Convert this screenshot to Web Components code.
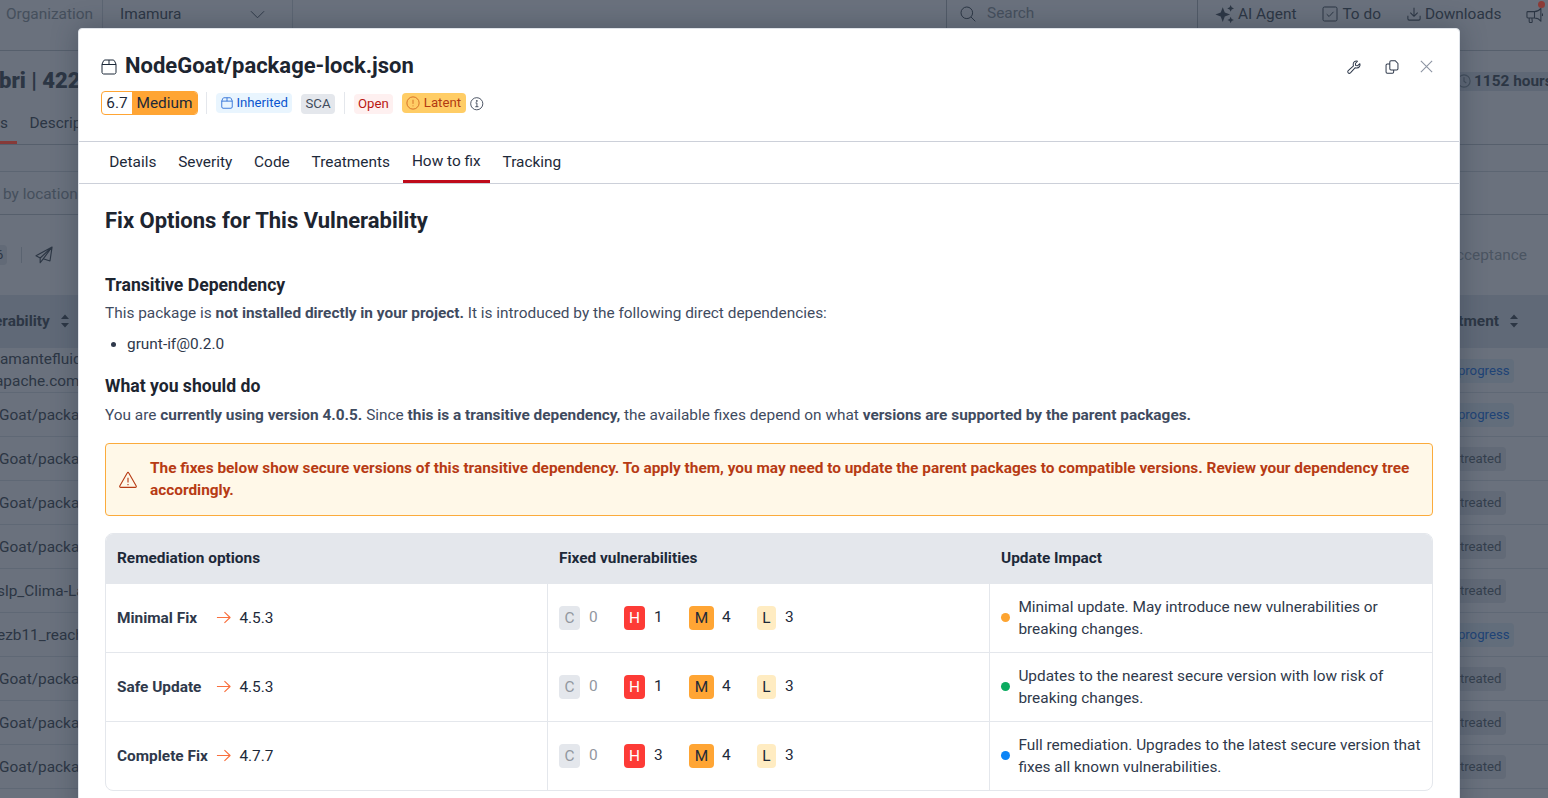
<!DOCTYPE html>
<html lang="en">
<head>
<meta charset="utf-8">
<title>NodeGoat/package-lock.json</title>
<style>
    body {
        margin: 0;
        height: 798px;
        overflow: hidden;
        position: relative;
        font-family: Roboto, "Liberation Sans", sans-serif;
        font-size: 15.4px;
        line-height: 22px;
        color: #2f394b;
        background: #6a717d;
    }
    vuln-modal {
        position: absolute;
        left: 78px;
        top: 28px;
    }
</style>
</head>
<body>
<page-backdrop></page-backdrop>
<vuln-modal heading="NodeGoat/package-lock.json">
    <severity-score slot="tags" score="6.7">Medium</severity-score>
    <tag-divider slot="tags" style="margin: 0 9px 0 8px"></tag-divider>
    <tag-pill slot="tags" kind="info" icon="box" style="width: 67px">Inherited</tag-pill>
    <tag-pill slot="tags" kind="neutral" style="margin: 1px 0 0 9px; width: 24px">SCA</tag-pill>
    <tag-divider slot="tags" style="margin: 0 9px"></tag-divider>
    <tag-pill slot="tags" kind="danger" style="margin-top: 1px; width: 29px">Open</tag-pill>
    <tag-pill slot="tags" kind="warn" icon="alert" style="margin-left: 9px; width: 55px">Latent</tag-pill>
    <ui-icon slot="tags" name="info" size="13.5" style="margin: 1px 0 0 4px"></ui-icon>
    <modal-tabs slot="tabs" items="Details,Severity,Code,Treatments,How to fix,Tracking" active="How to fix"></modal-tabs>
    <fix-guide></fix-guide>
</vuln-modal>

<script>
const ICONS = {
    box: '<path d="M4 1h8c.7 0 1.200.3 1.500.9L15 5.200v8.100c0 1-.8 1.700-1.700 1.700H2.700C1.800 15 1 14.300 1 13.300V5.200l1.500-3.300C2.800 1.300 3.300 1 4 1z M1 5.500h14 M8 1v4.500"/>',
    alert: '<circle cx="8" cy="8" r="7"/><path d="M8 4.300v4.700 M8 10.800v1"/>',
    info: '<circle cx="8" cy="8" r="7.200"/><path d="M6.500 7h1.700v4.500 M6.300 11.500h3.700 M7.600 4.200h1v1h-1z"/>',
    wrench: '<path d="M14.700 4.200 12.200 6.500 9.900 6.200 9.600 4l2.400-2.600C9.500.5 6.800 2.400 7.100 5.200c0 .6.100 1 .3 1.500L1.400 12.200c-.8.800-.6 1.900 0 2.500s1.700.7 2.500 0l5.500-5.900c.5.200 1 .3 1.600.3 2.800.100 4.600-2.500 3.700-4.900z"/>',
    copy: '<path d="M6.900 .8h4.700L14.800 4v6c0 .8-.6 1.400-1.400 1.400H6.900c-.8 0-1.400-.6-1.400-1.400V2.200C5.500 1.400 6.100.8 6.900.8z M5.500 4.500H2.600c-.7 0-1.400.6-1.400 1.400v7.900c0 .8.6 1.400 1.400 1.400h5.900c.8 0 1.400-.6 1.400-1.400v-2.400"/>',
    close: '<path d="M2 2l12 12 M14 2 2 14"/>',
    warning: '<path d="M7.300 1.700.7 13.300c-.3.600.1 1.300.8 1.300h13c.7 0 1.100-.7.8-1.300L8.700 1.700c-.3-.6-1.100-.6-1.400 0z M8 6v4.200 M8 11.600v1"/>',
    arrow: '<path d="M1 8h14 M9 2.200 15 8l-6 5.800"/>',
    chevron: '<path d="M1 4.500 8 11.500l7-7"/>',
    search: '<circle cx="6.800" cy="6.800" r="5.800"/><path d="m11 11 4.300 4.300"/>',
    sparkle: '<path fill="currentColor" stroke="none" d="M6 2 7.800 6.700l4.700 1.800L7.800 10.300 6 15 4.200 10.300-.5 8.500l4.700-1.800z M13 0l.9 2.100L16 3l-2.100.9L13 6l-.9-2.100L10 3l2.100-.9z M13 10.500l.9 2 2 .9-2 .9-.9 2-.9-2-2-.9 2-.9z"/>',
    check: '<rect x="1" y="1" width="14" height="14" rx="1.500"/><path d="m4.700 8.200 2.400 2.300 4.400-4.700"/>',
    download: '<path d="M8 .8v9.700 M3.800 6.500 8 10.600l4.200-4.100 M1 10v3.500c0 .9.600 1.500 1.500 1.500h11c.9 0 1.500-.6 1.500-1.500V10"/>',
    horn: '<path d="M1.800 5.300H8c2.600 0 4.700-1.300 6-3v12c-1.300-1.700-3.400-3-6-3H1.800c-.5 0-.9-.4-.9-.9V6.200c0-.5.4-.9.9-.9z M8 5.300v6 M3 11.300v3.200c0 .700.5 1 1 1h1c.6 0 1-.5.900-1l-.4-3.200 M15.500 7v2.500"/>',
    clock: '<circle cx="8" cy="8" r="7"/><path d="M8 3.800V8.300l2.600 1.900"/>',
    plane: '<path d="M15.200.9.900 8.700l3.700 2L15.200.9 13.300 13.300 7.300 11.400 15.200.9 M4.600 10.700v4.200l2.700-3.500"/>',
    sort: '<path fill="currentColor" stroke="none" d="M8 1.500 12 6H4z M8 14.500 4 10h8z"/>'
};

class UiIcon extends HTMLElement {
    constructor() {
        super();
        this.attachShadow({ mode: 'open' });
    }

    connectedCallback() {
        const size = this.getAttribute('size') || 16;
        const weight = this.getAttribute('weight') || 1;
        this.shadowRoot.innerHTML = `
            <style>
                :host { display: inline-flex; flex: none; }
                svg { display: block; overflow: visible; }
            </style>
            <svg width="${size}" height="${size}" viewBox="0 0 16 16" fill="none" stroke="currentColor"
                stroke-width="${weight}" stroke-linejoin="round">${ICONS[this.getAttribute('name')]}</svg>
        `;
    }
}

class TagPill extends HTMLElement {
    constructor() {
        super();
        this.attachShadow({ mode: 'open' });
        const icon = this.getAttribute('icon');
        this.shadowRoot.innerHTML = `
            <style>
                :host {
                    display: inline-flex;
                    align-items: center;
                    justify-content: space-between;
                    height: 20px;
                    padding: 0 5px;
                    border-radius: 4px;
                    font-size: 13.2px;
                    line-height: 20px;
                    white-space: nowrap;
                }
                :host([kind=info]) { background: #e9f5fe; color: #0b55cf; padding-right: 4px; }
                :host([kind=neutral]) { background: #e4e7ec; color: #3f4b5c; }
                :host([kind=neutral]) span { margin-left: -.5px; }
                :host([kind=danger]) { background: #fef0f0; color: #b91712; }
                :host([kind=danger]) span { margin-left: -1px; }
                :host([kind=warn]) { background: #ffcd66; color: #b23a12; padding: 0 5px 0 4px; }
                :host([kind=warn]) ui-icon { color: #d0661f; }
            </style>
            ${icon ? `<ui-icon name="${icon}" size="${icon === 'box' ? 12 : 14}"></ui-icon>` : ''}
            <span><slot></slot></span>
        `;
    }
}

class TagDivider extends HTMLElement {
    constructor() {
        super();
        this.attachShadow({ mode: 'open' });
        this.shadowRoot.innerHTML = `
            <style>
                :host { display: block; width: 1px; height: 22px; background: #e4e7ec; }
            </style>
        `;
    }
}

class SeverityScore extends HTMLElement {
    constructor() {
        super();
        this.attachShadow({ mode: 'open' });
        this.shadowRoot.innerHTML = `
            <style>
                :host {
                    display: flex;
                    box-sizing: border-box;
                    width: 97px;
                    height: 24px;
                    border: 1px solid #ffa534;
                    border-radius: 4px;
                    overflow: hidden;
                    line-height: 22px;
                    color: #1d2939;
                }
                .score { width: 30px; text-align: center; }
                .level { flex: 1; text-align: center; background: #ffa534; }
            </style>
            <span class="score">${this.getAttribute('score')}</span>
            <span class="level"><slot></slot></span>
        `;
    }
}

class ModalTabs extends HTMLElement {
    constructor() {
        super();
        this.attachShadow({ mode: 'open' });
        const active = this.getAttribute('active');
        const items = this.getAttribute('items').split(',');
        this.shadowRoot.innerHTML = `
            <style>
                :host {
                    display: flex;
                    gap: 4px;
                    height: 41px;
                    padding-left: 21.3px;
                    border-top: 1px solid #ccd0d9;
                    border-bottom: 1px solid #ccd0d9;
                    color: #1d2939;
                }
                span { padding: 0 8.95px; line-height: 40px; }
                .active { box-sizing: border-box; line-height: 38px; border-bottom: 3px solid #bf0b1a; }
            </style>
            ${items.map(t => `<span${t === active ? ' class="active"' : ''}>${t}</span>`).join('')}
        `;
    }
}

class NoticeBox extends HTMLElement {
    constructor() {
        super();
        this.attachShadow({ mode: 'open' });
        this.shadowRoot.innerHTML = `
            <style>
                :host {
                    display: flex;
                    align-items: center;
                    gap: 13px;
                    box-sizing: border-box;
                    height: 73px;
                    padding: 0 13px 2px;
                    border: 1px solid #fbab3c;
                    border-radius: 4px;
                    background: #fff8e8;
                    color: #b73b14;
                    font-weight: 700;
                }
                ui-icon { margin-top: 2px; }
            </style>
            <ui-icon name="warning" size="18"></ui-icon>
            <span><slot></slot></span>
        `;
    }
}

class SeverityCount extends HTMLElement {
    constructor() {
        super();
        this.attachShadow({ mode: 'open' });
        this.shadowRoot.innerHTML = `
            <style>
                :host { display: flex; gap: 9px; color: #1d2939; }
                .chip {
                    width: 21px;
                    height: 24px;
                    line-height: 24px;
                    border-radius: 4px;
                    text-align: center;
                }
                .count { width: 9px; line-height: 22px; }
                :host([level=C]) { color: #92979f; }
                :host([level=C]) .chip { background: #e4e7ec; }
                :host([level=H]) .chip { background: #fd3b36; color: #fff; }
                :host([level=M]) { gap: 8px; }
                :host([level=M]) .chip { background: #ffa534; width: 25px; }
                :host([level=L]) .chip { background: #ffecc2; width: 19px; }
            </style>
            <span class="chip">${this.getAttribute('level')}</span>
            <span class="count">${this.getAttribute('count')}</span>
        `;
    }
}

class FixRow extends HTMLElement {
    constructor() {
        super();
        this.attachShadow({ mode: 'open' });
        const counts = this.getAttribute('counts').split(',');
        this.shadowRoot.innerHTML = `
            <style>
                :host {
                    display: grid;
                    grid-template-columns: 442px 442px 1fr;
                    height: 68px;
                }
                :host(:not(:last-child)) { border-bottom: 1px solid #e4e7ec; }
                div { display: flex; align-items: center; padding-left: 11px; }
                div + div { border-left: 1px solid #e4e7ec; margin-left: -1px; }
                b { width: 99px; }
                .version { color: #1d2939; }
                .counts { gap: 26px; }
                ui-icon { color: #f9703e; margin: -1px 8.400px 0 0; }
                i { flex: none; width: 9px; height: 9px; margin: -1px 8.400px 0 0; border-radius: 50%; }
            </style>
            <div><b>${this.getAttribute('name')}</b><ui-icon name="arrow" size="15" weight="1.2"></ui-icon><span class="version">${this.getAttribute('version')}</span></div>
            <div class="counts">
                ${['C', 'H', 'M', 'L'].map((l, i) => `<severity-count level="${l}" count="${counts[i]}"></severity-count>`).join('')}
            </div>
            <div><i style="background: ${this.getAttribute('dot')}"></i><span><slot></slot></span></div>
        `;
    }
}

class FixTable extends HTMLElement {
    constructor() {
        super();
        this.attachShadow({ mode: 'open' });
        this.shadowRoot.innerHTML = `
            <style>
                :host {
                    display: block;
                    border: 1px solid #e4e7ec;
                    border-radius: 8px;
                    overflow: hidden;
                }
                header {
                    display: grid;
                    grid-template-columns: 442px 442px 1fr;
                    height: 50px;
                    line-height: 48px;
                    background: #e4e7ec;
                    color: #1d2939;
                    font-weight: 700;
                }
                header span { padding-left: 11px; }
            </style>
            <header><span>Remediation options</span><span>Fixed vulnerabilities</span><span>Update Impact</span></header>
            <slot></slot>
        `;
    }
}

class FixGuide extends HTMLElement {
    constructor() {
        super();
        this.attachShadow({ mode: 'open' });
        this.shadowRoot.innerHTML = `
            <style>
                :host { display: block; padding: 21px 26px 0; }
                h2, h3, p, ul { margin: 0; }
                h2 { font-size: 22px; line-height: 32px; color: #1d2530; }
                h3 { font-size: 17.6px; line-height: 26px; color: #1d2530; }
                h2 + h3 { margin-top: 35px; }
                p { margin-top: 4px; color: #3f4b5f; }
                ul { margin: 9px 0 18px; padding-left: 22px; }
                ul + h3 + p { margin-top: 5px; }
                notice-box { margin: 17px 0; }
            </style>
            <h2>Fix Options for This Vulnerability</h2>
            <h3>Transitive Dependency</h3>
            <p>This package is <b>not installed directly in your project.</b> It is introduced by the following direct dependencies:</p>
            <ul><li>grunt-if@0.2.0</li></ul>
            <h3>What you should do</h3>
            <p>You are <b>currently using version 4.0.5.</b> Since <b>this is a transitive dependency,</b> the available fixes depend on what <b>versions are supported by the parent packages.</b></p>
            <notice-box>The fixes below show secure versions of this transitive dependency. To apply them, you may need to update the parent packages to compatible versions. Review your dependency tree accordingly.</notice-box>
            <fix-table>
                <fix-row name="Minimal Fix" version="4.5.3" counts="0,1,4,3" dot="#fda431">Minimal update. May introduce new vulnerabilities or<br>breaking changes.</fix-row>
                <fix-row name="Safe Update" version="4.5.3" counts="0,1,4,3" dot="#0bab60">Updates to the nearest secure version with low risk of<br>breaking changes.</fix-row>
                <fix-row name="Complete Fix" version="4.7.7" counts="0,3,4,3" dot="#0b84f6">Full remediation. Upgrades to the latest secure version that<br>fixes all known vulnerabilities.</fix-row>
            </fix-table>
        `;
    }
}

class VulnModal extends HTMLElement {
    constructor() {
        super();
        this.attachShadow({ mode: 'open' });
        this.shadowRoot.innerHTML = `
            <style>
                :host {
                    display: block;
                    box-sizing: border-box;
                    width: 1382px;
                    height: 790px;
                    border: 1px solid #dfe3e9;
                    border-radius: 4px;
                    background: #fff;
                    box-shadow: 0 0 26px rgba(40, 52, 70, .42);
                }
                header { height: 112px; box-sizing: border-box; padding: 22px 25px 0 22px; }
                .title { display: flex; align-items: center; height: 29px; }
                h1 { flex: 1; margin: 0 0 0 8px; font-size: 22px; line-height: 29px; color: #1d2530; }
                .title > ui-icon { margin-top: 2px; color: #1d2939; }
                .actions { display: flex; align-items: center; gap: 24px; margin-top: 2px; }
                .actions ui-icon:last-child { color: #8d95a3; margin-left: -4px; }
                .tags { display: flex; align-items: center; height: 24px; margin-top: 11px; }
            </style>
            <header>
                <div class="title">
                    <ui-icon name="box" size="16"></ui-icon>
                    <h1>${this.getAttribute('heading')}</h1>
                    <div class="actions">
                        <ui-icon name="wrench" size="14" weight="1.15"></ui-icon>
                        <ui-icon name="copy" size="14" weight="1.15"></ui-icon>
                        <ui-icon name="close" size="15" weight="1.2"></ui-icon>
                    </div>
                </div>
                <div class="tags"><slot name="tags"></slot></div>
            </header>
            <slot name="tabs"></slot>
            <slot></slot>
        `;
    }
}

class BackdropRow extends HTMLElement {
    constructor() {
        super();
        this.attachShadow({ mode: 'open' });
        const state = this.getAttribute('state');
        this.shadowRoot.innerHTML = `
            <style>
                :host {
                    display: flex;
                    box-sizing: border-box;
                    height: 44px;
                    align-items: center;
                    justify-content: space-between;
                    border-bottom: 1px solid #5f6875;
                    white-space: nowrap;
                    overflow: hidden;
                }
                .state {
                    width: 70px;
                    height: 24px;
                    margin: 1px 42px 0 0;
                    padding-right: 4.500px;
                    border-radius: 4px;
                    text-align: right;
                    font-size: 13.2px;
                    line-height: 24px;
                    background: #626a77;
                    color: #343f4d;
                }
                .progress { background: #626d7b; color: #1e4376; margin-right: 34px; }
            </style>
            <span><slot></slot></span>
            ${state ? `<span class="state ${state}">${state}</span>` : ''}
        `;
    }
}

class PageBackdrop extends HTMLElement {
    constructor() {
        super();
        this.attachShadow({ mode: 'open' });
        this.shadowRoot.innerHTML = `
            <style>
                :host { display: block; height: 798px; overflow: hidden; color: #2c3644; white-space: nowrap; }
                .bar, .line { display: flex; align-items: center; justify-content: space-between; box-sizing: border-box; }
                .bar > div, .line > div { display: flex; align-items: center; }
                .bar { height: 51px; align-items: flex-start; border-bottom: 1px solid #565f6c; }
                .bar > div { height: 28px; }
                .org { width: 102px; box-sizing: border-box; padding-left: 6px; color: #454f5c; }
                .pick { display: flex; align-items: center; width: 145px; padding: 0 27px 0 17px; border: solid #5c6572; border-width: 0 1px; margin-right: auto; }
                .pick span { flex: 1; }
                .find { width: 237px; padding-left: 13px; gap: 11px; border: solid #515a67; border-width: 0 1px; color: #454f5c; }
                .find span { margin-top: -2px; }
                .find ui-icon { color: #2c3644; }
                .links { width: 332px; margin-left: 18px; }
                .links ui-icon { margin-right: 4px; }
                .links span { margin-right: 26px; }
                .links .horn { position: relative; margin: 0 -4px 0 -1px; }
                .horn::after { content: ""; position: absolute; right: -2px; top: -5px; width: 7px; height: 7px; border-radius: 50%; background: #8c3b37; }
                .name { height: 60px; font-weight: 700; }
                .name > b { font-size: 22px; margin-left: -1px; }
                .hours { width: 91px; height: 19px; gap: 3px; background: #5f6876; }
                .hours ui-icon { color: #424d5b; }
                .tabs { height: 34px; align-items: flex-start; justify-content: flex-start; border-bottom: 1px solid #565f6c; }
                .tabs .on { width: 17px; height: 33px; border-bottom: 3px solid #863a38; box-sizing: border-box; margin-right: 12.500px; }
                .tabs span { line-height: 24px; }
                .gap { height: 26px; border-bottom: 1px solid #5c6572; }
                .filter { height: 43px; padding: 2px 0 0 3px; border-bottom: 1px solid #565f6c; color: #454f5c; }
                .acts { height: 80px; padding: 0 21px 0 0; color: #4b5562; }
                .six { width: 7px; height: 20px; line-height: 20px; font-size: 13px; background: #626a77; color: #2c3644; border-radius: 0 4px 4px 0; text-indent: -4px; }
                .rule { width: 1px; height: 16px; margin: 0 13px 0 14px; background: #5a6370; }
                .plane { color: #2c3644; }
                .head { height: 53px; padding: 0 26px 1px 0; background: #606977; font-weight: 700; }
                .head > div { gap: 7px; }
                .two { display: block; line-height: 22px; margin-top: -1px; }
            </style>
            <div class="bar">
                <div class="org">Organization</div>
                <div class="pick"><span>Imamura</span><ui-icon name="chevron" size="15"></ui-icon></div>
                <div class="find"><ui-icon name="search" size="16"></ui-icon><span>Search</span></div>
                <div class="links">
                    <ui-icon name="sparkle" size="18"></ui-icon><span>AI Agent</span>
                    <ui-icon name="check" size="16"></ui-icon><span>To do</span>
                    <ui-icon name="download" size="14" weight="1.2"></ui-icon><span>Downloads</span>
                    <ui-icon class="horn" name="horn" size="17"></ui-icon>
                </div>
            </div>
            <div class="line name"><b>bri | 422</b><div class="hours"><ui-icon name="clock" size="14" weight="1.3"></ui-icon><span>1152 hours</span></div></div>
            <div class="line tabs"><span class="on">s</span><span>Descrip</span></div>
            <div class="gap"></div>
            <div class="line filter">by location</div>
            <div class="line acts">
                <div><span class="six">6</span><span class="rule"></span><ui-icon class="plane" name="plane" size="18"></ui-icon></div>
                <span>cceptance</span>
            </div>
            <div class="line head">
                <div><span style="margin-left: -6px">erability</span><ui-icon name="sort" size="16"></ui-icon></div>
                <div><span>tment</span><ui-icon name="sort" size="16"></ui-icon></div>
            </div>
            <backdrop-row state="progress" style="height: 45px"><span class="two">amantefluid<br><span style="margin-left: -5px">apache.com</span></span></backdrop-row>
            <backdrop-row state="progress"><span style="margin-left: -1px">Goat/packa</span></backdrop-row>
            <backdrop-row state="treated"><span style="margin-left: -1px">Goat/packa</span></backdrop-row>
            <backdrop-row state="treated"><span style="margin-left: -1px">Goat/packa</span></backdrop-row>
            <backdrop-row state="treated"><span style="margin-left: -1px">Goat/packa</span></backdrop-row>
            <backdrop-row state="treated"><span style="margin-left: -3px">slp_Clima-La</span></backdrop-row>
            <backdrop-row state="progress"><span style="margin-left: -3px">ezb11_reach</span></backdrop-row>
            <backdrop-row state="treated"><span style="margin-left: -1px">Goat/packa</span></backdrop-row>
            <backdrop-row state="treated"><span style="margin-left: -1px">Goat/packa</span></backdrop-row>
            <backdrop-row state="treated"><span style="margin-left: -1px">Goat/packa</span></backdrop-row>
            <backdrop-row></backdrop-row>
        `;
    }
}

customElements.define('ui-icon', UiIcon);
customElements.define('tag-pill', TagPill);
customElements.define('tag-divider', TagDivider);
customElements.define('severity-score', SeverityScore);
customElements.define('modal-tabs', ModalTabs);
customElements.define('notice-box', NoticeBox);
customElements.define('severity-count', SeverityCount);
customElements.define('fix-row', FixRow);
customElements.define('fix-table', FixTable);
customElements.define('fix-guide', FixGuide);
customElements.define('vuln-modal', VulnModal);
customElements.define('backdrop-row', BackdropRow);
customElements.define('page-backdrop', PageBackdrop);
</script>
</body>
</html>
